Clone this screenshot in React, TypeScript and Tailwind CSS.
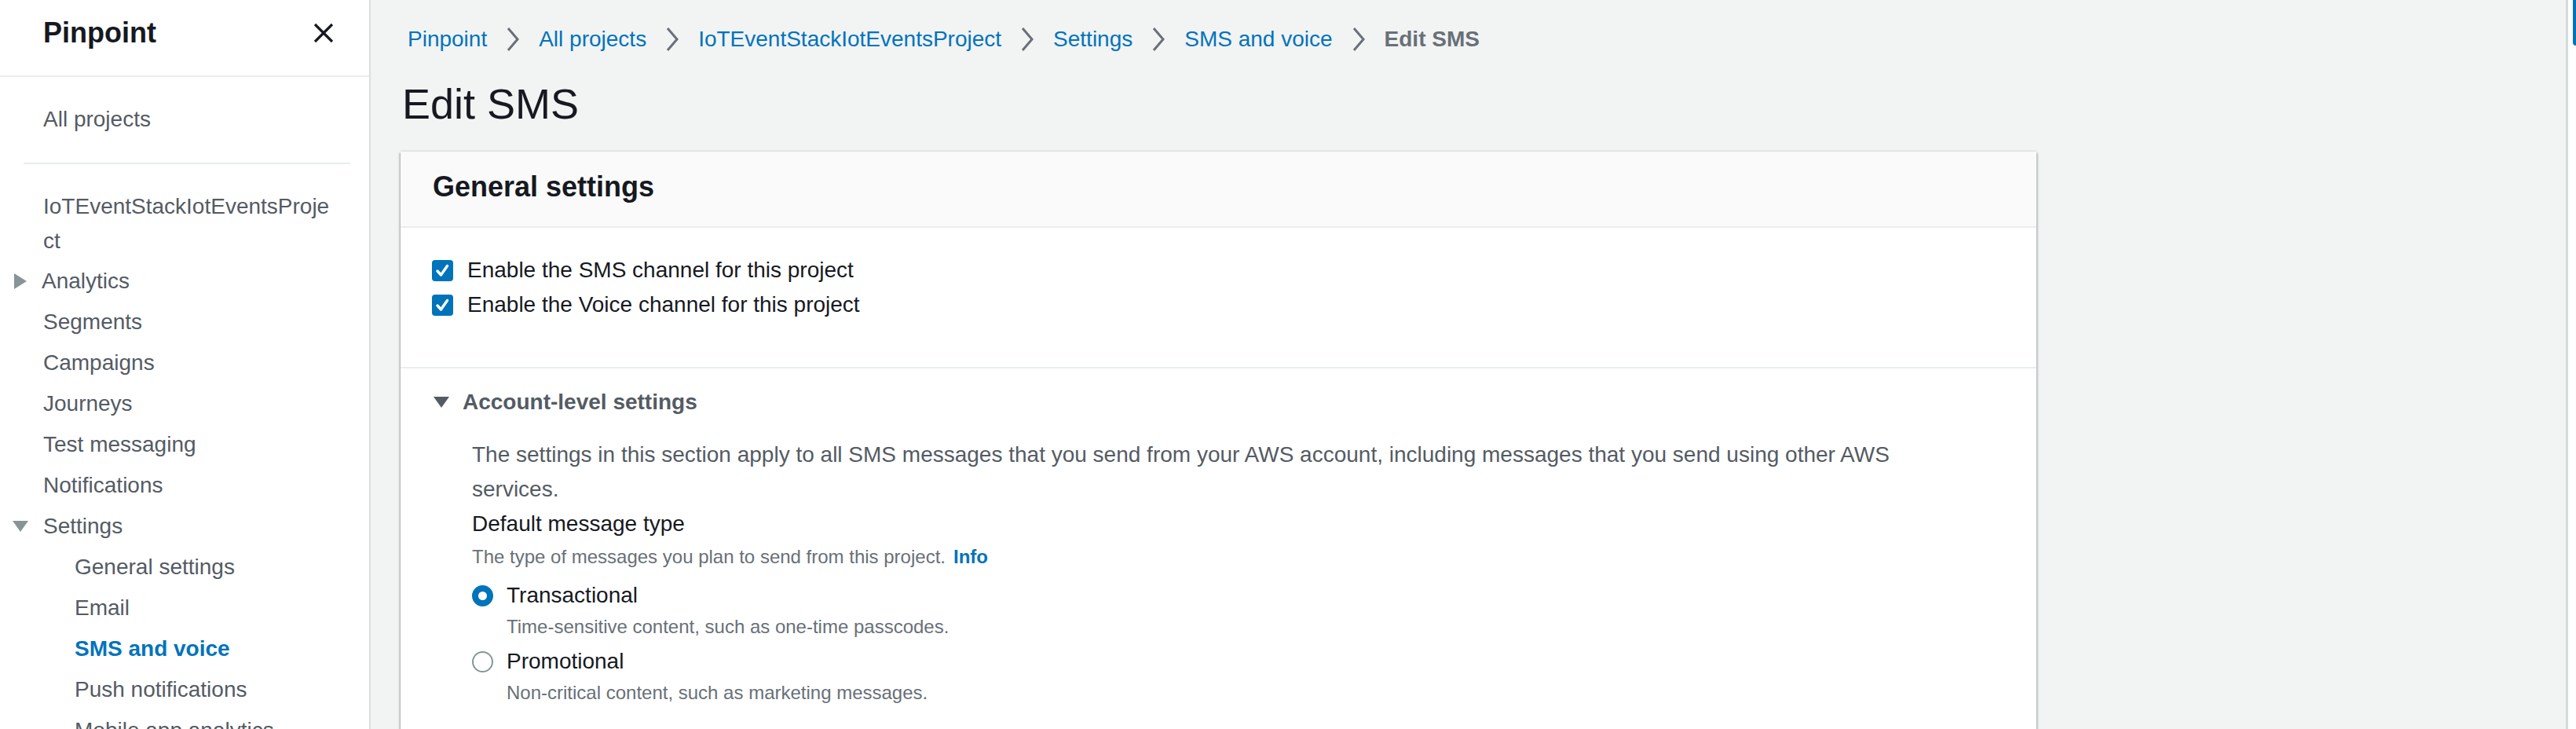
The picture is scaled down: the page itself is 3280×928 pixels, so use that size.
import React from "react";

function TriRight() {
  return (
    <svg width="16" height="20" viewBox="0 0 16 20" className="shrink-0">
      <polygon points="0,0 16,10 0,20" fill="#879596" />
    </svg>
  );
}

function TriDown({ color = "#879596", w = 20, h = 14 }: { color?: string; w?: number; h?: number }) {
  return (
    <svg width={w} height={h} viewBox="0 0 20 14" className="shrink-0">
      <polygon points="0,0 20,0 10,14" fill={color} />
    </svg>
  );
}

function Chevron() {
  return (
    <svg width="18" height="30" viewBox="0 0 18 30" className="mx-[24px] shrink-0">
      <polyline points="3,1 15,15 3,29" fill="none" stroke="#687078" strokeWidth="3" />
    </svg>
  );
}

function Checkbox() {
  return (
    <div className="w-[27px] h-[27px] rounded-[4px] bg-[#0073bb] flex items-center justify-center shrink-0">
      <svg width="27" height="27" viewBox="0 0 27 27">
        <polyline points="7,14 11.5,19 19.5,7.5" fill="none" stroke="#ffffff" strokeWidth="3.4" strokeLinecap="round" strokeLinejoin="round" />
      </svg>
    </div>
  );
}

function Sidebar() {
  const sub = ["General settings", "Email"];
  return (
    <div className="w-[472px] shrink-0 h-full bg-white border-r-2 border-[#dadede] text-[28px] text-[#545b64]">
      <div className="h-[98px] border-b-2 border-[#eaeded] flex items-start justify-between pl-[55px] pr-[45px]">
        <div className="pt-[20px] leading-[44px] text-[36px] font-bold text-[#16191f]">Pinpoint</div>
        <svg width="26" height="26" viewBox="0 0 26 26" className="mt-[29px]">
          <line x1="2" y1="2" x2="24" y2="24" stroke="#16191f" strokeWidth="3.2" />
          <line x1="24" y1="2" x2="2" y2="24" stroke="#16191f" strokeWidth="3.2" />
        </svg>
      </div>
      <div className="pt-[32px]">
        <div className="pl-[55px] leading-[44px]">All projects</div>
        <div className="mt-[33px] ml-[30px] w-[416px] h-[2px] bg-[#eaeded]" />
        <div className="mt-[32px] pl-[55px] leading-[44px]">
          <div>IoTEventStackIotEventsProje</div>
          <div>ct</div>
        </div>
        <div className="mt-[3px]">
          <div className="flex items-center pl-[18px] leading-[52px]">
            <TriRight />
            <span className="ml-[19px]">Analytics</span>
          </div>
          {["Segments", "Campaigns", "Journeys", "Test messaging", "Notifications"].map((t) => (
            <div key={t} className="pl-[55px] leading-[52px]">{t}</div>
          ))}
          <div className="flex items-center pl-[16px] leading-[52px]">
            <TriDown />
            <span className="ml-[19px]">Settings</span>
          </div>
          {sub.map((t) => (
            <div key={t} className="pl-[95px] leading-[52px]">{t}</div>
          ))}
          <div className="pl-[95px] leading-[52px] font-bold text-[#0073bb]">SMS and voice</div>
          <div className="pl-[95px] leading-[52px]">Push notifications</div>
          <div className="pl-[95px] leading-[52px]">Mobile app analytics</div>
        </div>
      </div>
    </div>
  );
}

function Main() {
  const crumbs = ["Pinpoint", "All projects", "IoTEventStackIotEventsProject", "Settings", "SMS and voice"];
  return (
    <div className="flex-1 h-full pl-[38px] overflow-hidden">
      <div className="pt-[28px] pl-[9px] flex items-center leading-[44px] text-[28px]">
        {crumbs.map((c) => (
          <React.Fragment key={c}>
            <span className="text-[#0073bb] whitespace-nowrap">{c}</span>
            <Chevron />
          </React.Fragment>
        ))}
        <span className="font-bold text-[#687078] whitespace-nowrap">Edit SMS</span>
      </div>
      <div className="mt-[24px] pl-[2px] text-[54px] leading-[72px] text-[#16191f]">Edit SMS</div>
      <div className="mt-[25px] w-[2083px] bg-white shadow-[0_2px_2px_0_rgba(0,28,36,0.3),2px_2px_2px_0_rgba(0,28,36,0.15),-2px_2px_2px_0_rgba(0,28,36,0.15),0_-1px_2px_0_rgba(0,28,36,0.12)]">
        <div className="h-[97px] bg-[#fafafa] border-b-2 border-[#eaeded] pl-[41px] pt-[23px]">
          <div className="text-[36px] font-bold leading-[44px] text-[#16191f]">General settings</div>
        </div>
        <div className="pt-[32px] pb-[57px] pl-[40px] border-b-2 border-[#eaeded] text-[28px] text-[#16191f]">
          <div className="flex items-center leading-[44px]">
            <Checkbox />
            <span className="ml-[18px]">Enable the SMS channel for this project</span>
          </div>
          <div className="flex items-center leading-[44px]">
            <Checkbox />
            <span className="ml-[18px]">Enable the Voice channel for this project</span>
          </div>
        </div>
        <div className="pt-[21px] pl-[42px] pb-[40px]">
          <div className="flex items-center leading-[44px] text-[28px] font-bold text-[#545b64]">
            <TriDown color="#545b64" />
            <span className="ml-[17px]">Account-level settings</span>
          </div>
          <div className="mt-[23px] pl-[49px]">
            <div className="text-[28px] leading-[44px] text-[#545b64]">
              The settings in this section apply to all SMS messages that you send from your AWS account, including messages that you send using other AWS
              <br />
              services.
            </div>
            <div className="text-[28px] leading-[44px] text-[#16191f]">Default message type</div>
            <div className="mt-[2px] text-[24px] leading-[36px] text-[#687078]">
              The type of messages you plan to send from this project.
              <span className="ml-[10px] font-bold text-[#0073bb]">Info</span>
            </div>
            <div className="mt-[9px] flex items-center leading-[44px] text-[28px] text-[#16191f]">
              <div className="w-[27px] h-[27px] rounded-full border-[8px] border-[#0073bb] bg-white shrink-0" />
              <span className="ml-[17px]">Transactional</span>
            </div>
            <div className="pl-[44px] text-[24px] leading-[36px] text-[#687078]">
              Time-sensitive content, such as one-time passcodes.
            </div>
            <div className="mt-[4px] flex items-center leading-[44px] text-[28px] text-[#16191f]">
              <div className="w-[27px] h-[27px] rounded-full border-2 border-[#879596] bg-white shrink-0" />
              <span className="ml-[17px]">Promotional</span>
            </div>
            <div className="pl-[44px] text-[24px] leading-[36px] text-[#687078]">
              Non-critical content, such as marketing messages.
            </div>
          </div>
        </div>
      </div>
    </div>
  );
}

export default function App() {
  return (
    <div className="flex h-[928px] w-[3280px] overflow-hidden bg-[#f2f3f3] font-['Liberation_Sans',Arial,sans-serif]">
      <Sidebar />
      <Main />
      <div className="w-[13px] shrink-0 h-full border-l-[3px] border-[#d5dbdb] bg-white flex justify-end">
        <div className="w-[4px] h-[58px] rounded-bl-[6px] bg-[#0073bb]" />
      </div>
    </div>
  );
}
